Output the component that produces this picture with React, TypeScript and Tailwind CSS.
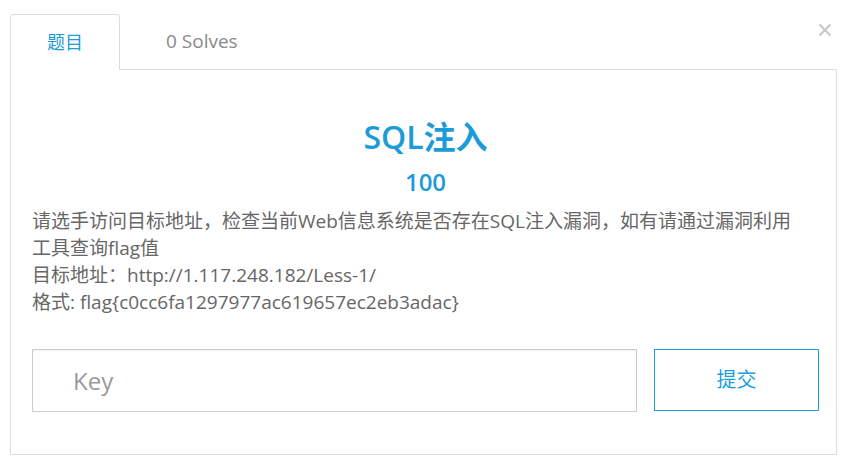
import { useState } from 'react'

const font = { fontFamily: '"Open Sans", "Noto Sans CJK SC", sans-serif' }

export default function App() {
    const [key, setKey] = useState('')

    return (
        <div className="w-[845px] h-[473px] bg-white pt-[14px] pl-[10px] pr-[8px]" style={font}>
            {/* tabs */}
            <div className="flex items-stretch h-[56px]">
                <div className="w-[110px] border border-b-0 border-[#dddddd] rounded-t-[4px] flex items-center justify-center text-[18px] text-[#1b9bd7] bg-white">
                    题目
                </div>
                <div className="border-b border-[#dddddd] flex items-center pl-[46px] pr-[20px] text-[19px] text-[#8a8a8a]">
                    0 Solves
                </div>
                <div className="flex-1 border-b border-[#dddddd] flex justify-end items-start">
                    <button className="mt-[8px] mr-[4px] p-[1px]">
                        <svg width="14" height="14" viewBox="0 0 14 14">
                            <path d="M1.5 1.5 L12.5 12.5 M12.5 1.5 L1.5 12.5" stroke="#c9c9c9" strokeWidth="2.2" />
                        </svg>
                    </button>
                </div>
            </div>

            {/* panel */}
            <div className="border border-t-0 border-[#dddddd] pl-[21px] pr-[17px] pt-[47px] pb-[42px]">
                <h2 className="text-center text-[32px] leading-[40px] text-[#1b9bd7] font-semibold">SQL注入</h2>
                <div className="text-center text-[24px] leading-[32px] text-[#1b9bd7] font-semibold mt-[9px]">100</div>
                <div className="mt-[10px] text-[19px] leading-[27px] text-[#666666]">
                    <p>请选手访问目标地址，检查当前Web信息系统是否存在SQL注入漏洞，如有请通过漏洞利用<br />工具查询flag值</p>
                    <p>目标地址：http://1.117.248.182/Less-1/</p>
                    <p>格式: flag{'{'}c0cc6fa1297977ac619657ec2eb3adac{'}'}</p>
                </div>
                <div className="mt-[33px] flex gap-[17px]">
                    <input
                        value={key}
                        onChange={e => setKey(e.target.value)}
                        placeholder="Key"
                        className="flex-1 h-[63px] border border-[#cccccc] shadow-[inset_0_1px_2px_rgba(0,0,0,0.06)] pl-[40px] text-[24px] text-[#555] placeholder:text-[#9a9a9a] outline-none"
                        style={font}
                    />
                    <button className="w-[165px] h-[62px] border border-[#1a9fdd] text-[#1a9fdd] text-[20px] bg-white">
                        提交
                    </button>
                </div>
            </div>
        </div>
    )
}
